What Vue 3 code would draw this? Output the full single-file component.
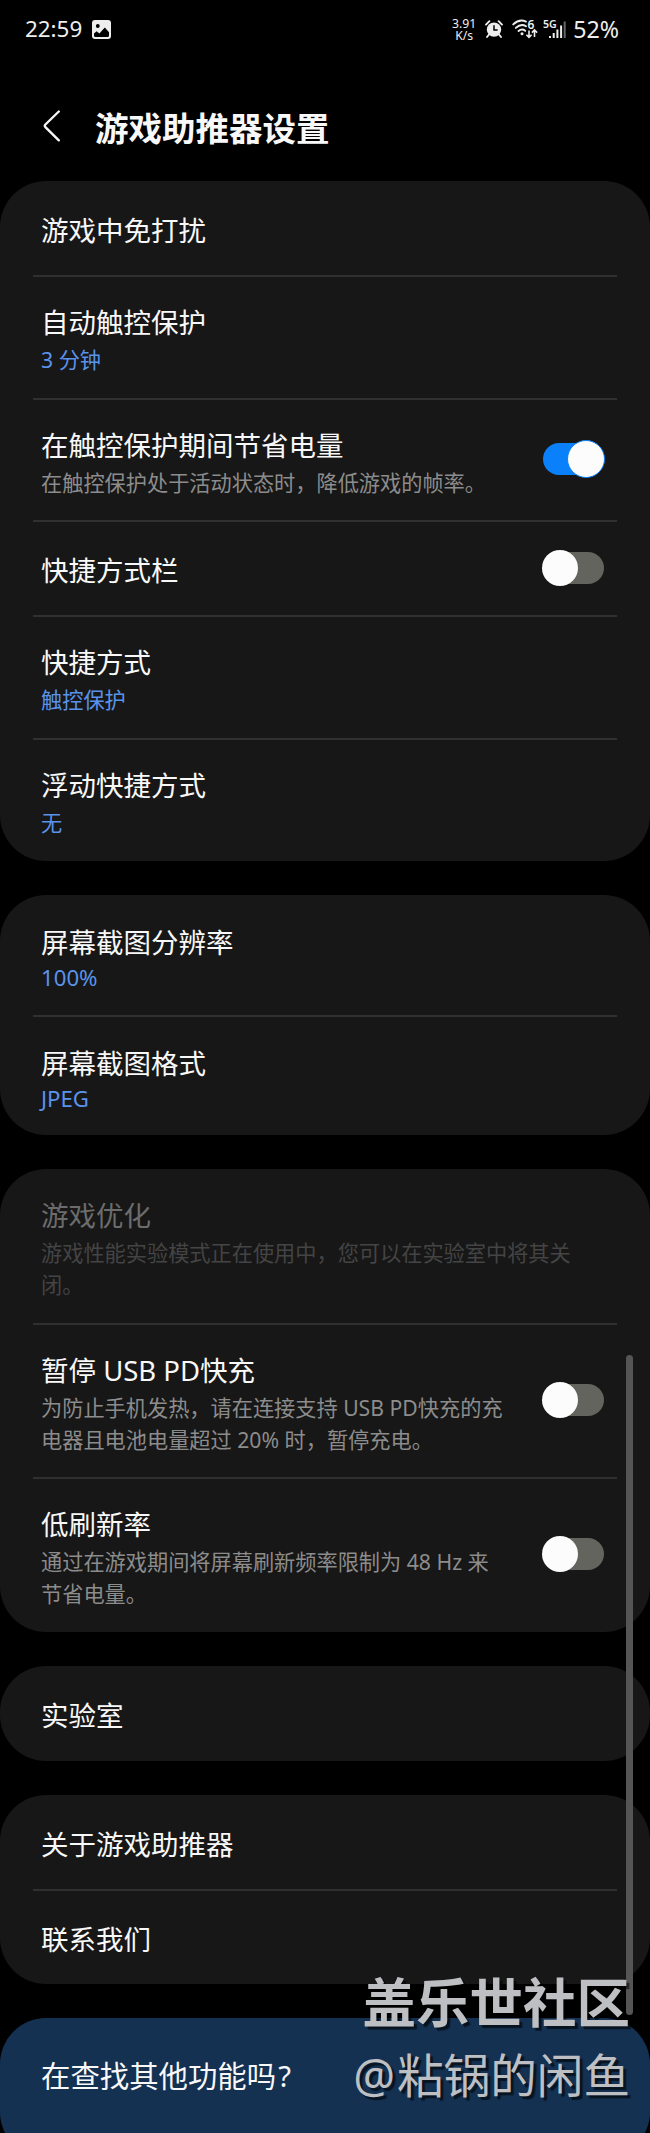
<script setup>
const groups = [
  [
    { title: '游戏中免打扰', h: 95 },
    { title: '自动触控保护', value: '3 分钟', h: 123 },
    { title: '在触控保护期间节省电量', note: ['在触控保护处于活动状态时，降低游戏的帧率。'], toggle: 'on', h: 122 },
    { title: '快捷方式栏', toggle: 'off', h: 95 },
    { title: '快捷方式', value: '触控保护', h: 123 },
    { title: '浮动快捷方式', value: '无', h: 122 },
  ],
  [
    { title: '屏幕截图分辨率', value: '100%', latin: true, h: 121 },
    { title: '屏幕截图格式', value: 'JPEG', latin: true, h: 119 },
  ],
  [
    { title: '游戏优化', note: ['游戏性能实验模式正在使用中，您可以在实验室中将其关', '闭。'], disabled: true, h: 155 },
    { title: '暂停 USB PD快充', note: ['为防止手机发热，请在连接支持 USB PD快充的充', '电器且电池电量超过 20% 时，暂停充电。'], toggle: 'off', h: 154 },
    { title: '低刷新率', note: ['通过在游戏期间将屏幕刷新频率限制为 48 Hz 来', '节省电量。'], toggle: 'off', h: 154 },
  ],
  [{ title: '实验室', h: 95 }],
  [
    { title: '关于游戏助推器', h: 95 },
    { title: '联系我们', h: 94 },
  ],
]
</script>

<template>
  <div class="screen">
    <div class="status">
      <span class="time">22:59</span>
      <svg class="pic" viewBox="0 0 19 19" width="19" height="19">
        <rect x="0" y="0" width="19" height="19" rx="3" fill="#eee" />
        <circle cx="5.8" cy="6" r="1.9" fill="#000" />
        <path d="M2 13.5 L4.6 11.2 L7.4 13.4 L12.8 7.6 L17 12.2 V15.5 Q17 17 15.5 17 H3.5 Q2 17 2 15.5 Z" fill="#000" />
      </svg>
      <span class="grow"></span>
      <span class="speed"><span>3.91</span><span>K/s</span></span>
      <svg class="alarm" viewBox="0 0 18 18" width="18" height="18">
        <circle cx="9" cy="9.6" r="7.2" fill="#eee" />
        <path d="M1 4.6 L4.4 1.2 M17 4.6 L13.6 1.2 M4 14.5 L2 17 M14 14.5 L16 17" stroke="#eee" stroke-width="1.9" stroke-linecap="round" />
        <path d="M9 5.2 V10 H12.6" stroke="#000" stroke-width="1.5" fill="none" />
      </svg>
      <svg class="wifi" viewBox="0 0 26 20" width="26" height="20">
        <g fill="none" stroke="#eee" stroke-width="1.9" stroke-linecap="round">
          <path d="M1.2 5.4 Q7.5 -0.6 14 2.6" />
          <path d="M3.8 8.9 Q9 4.2 14 7.2" />
          <path d="M6.5 12 Q10 9.2 13.2 11.8" />
        </g>
        <circle cx="10" cy="14.8" r="1.5" fill="#eee" />
        <text x="15.4" y="9.6" class="six">6</text>
        <path d="M17 11.5 V18 M14.4 15.8 L17 18.4 L19.6 15.8 M22.5 18 V11.5 M19.9 13.6 L22.5 11 L25.1 13.6" fill="none" stroke="#eee" stroke-width="1.6" />
      </svg>
      <svg class="cell" viewBox="0 0 24 20" width="24" height="20">
        <text x="0" y="8.6" class="fiveg">5G</text>
        <path d="M7 17 V19 M10.7 14 V19 M14.4 10.5 V19 M18.1 6.5 V19" stroke="#eee" stroke-width="2" />
        <path d="M21.7 2.5 V19" stroke="#666" stroke-width="2" />
      </svg>
      <span class="pct">52%</span>
    </div>

    <header class="header">
      <svg class="back" viewBox="0 0 18 32" width="18" height="32">
        <path d="M15.8 1.5 L2.4 14.5 Q1.2 15.8 2.4 17.1 L15.8 30.3" fill="none" stroke="#f5f5f5" stroke-width="2.4" stroke-linecap="round" />
      </svg>
      <h1>游戏助推器设置</h1>
    </header>

    <main class="list">
      <section v-for="(rows, g) in groups" :key="g" class="card">
        <div
          v-for="row in rows"
          :key="row.title"
          class="row"
          :class="{ single: !row.value && !row.note, latin: row.latin, disabled: row.disabled }"
          :style="{ height: row.h + 'px' }"
        >
          <div class="copy">
            <div class="title">{{ row.title }}</div>
            <div v-if="row.value" class="sub value">{{ row.value }}</div>
            <div v-for="line in row.note" :key="line" class="sub">{{ line }}</div>
          </div>
          <span v-if="row.toggle" class="toggle" :class="row.toggle"><i></i></span>
        </div>
      </section>
      <section class="card more">在查找其他功能吗<span class="ask">?</span></section>
    </main>

    <div class="scrollbar"></div>
    <div class="mark">
      <div class="site">盖乐世社区</div>
      <div class="user"><span class="at">@</span>粘锅的闲鱼</div>
    </div>
  </div>
</template>

<style>
html, body { margin: 0; background: #000; }
</style>

<style scoped>
.screen {
  position: relative;
  width: 650px;
  height: 2133px;
  overflow: hidden;
  background: #000;
  color: #f8f8f8;
  font-family: "Noto Sans", "Noto Sans CJK SC", sans-serif;
}
.status {
  display: flex;
  align-items: flex-start;
  box-sizing: border-box;
  height: 60px;
  padding: 19px 31px 0 25px;
  color: #eee;
}
.time { font-size: 22.4px; line-height: 22px; margin-top: -1px; }
.pic { margin: 1px 0 0 10px; }
.grow { flex: 1; }
.speed {
  display: flex;
  flex-direction: column;
  align-items: center;
  width: 26px;
  margin-right: 8px;
  font-size: 12.2px;
  line-height: 12px;
  margin-top: -1px;
}
.alarm { margin: 1px 9px 0 0; }
.wifi { margin-right: 5px; overflow: visible; }
.cell { margin-right: 6px; overflow: visible; }
.six { font-size: 12px; font-weight: 600; fill: #eee; }
.fiveg { font-size: 10.6px; font-weight: 600; fill: #eee; }
.pct { font-size: 23.2px; line-height: 22px; margin-top: -1px; }
.header {
  display: flex;
  align-items: center;
  height: 121px;
  box-sizing: border-box;
  padding: 11px 0 0 43px;
}
.back { margin: 0; }
h1 { margin: 3px 0 0 34px; font-size: 33.5px; line-height: 40px; font-weight: 700; white-space: nowrap; }
.list { display: flex; flex-direction: column; gap: 34px; }
.card { border-radius: 46px; background: #171717; }
.row {
  position: relative;
  display: flex;
  justify-content: space-between;
  box-sizing: border-box;
  padding: 29px 46px 0 41px;
}
.row + .row::before {
  content: "";
  position: absolute;
  left: 33px;
  right: 33px;
  top: -1px;
  height: 2px;
  background: #303030;
}
.row.single { padding-top: 32px; }
.title { font-size: 27.5px; line-height: 36px; white-space: nowrap; }
.sub { font-size: 21.2px; line-height: 32px; color: #8c8c8c; white-space: nowrap; }
.title + .sub { margin-top: 3px; }
.latin .title + .sub { margin-top: 1px; font-size: 22.2px; }
.latin { padding-top: 30px; }
.sub.value { color: #5a93ea; }
.disabled .title { color: #6c6c6c; }
.disabled .sub { color: #444; }
.toggle {
  position: absolute;
  right: 46px;
  top: calc(50% - 17px);
  width: 61px;
  height: 32px;
  border-radius: 16px;
  background: #63645e;
}
.toggle i {
  position: absolute;
  top: -2px;
  left: -1px;
  width: 36px;
  height: 36px;
  border-radius: 50%;
  background: #fcfcfc;
}
.toggle.on { background: #0a80fb; }
.toggle.on i {
  box-sizing: border-box;
  left: auto;
  right: -1px;
  top: -3px;
  width: 38px;
  height: 38px;
  border: 1.5px solid #0a80fb;
}
.more {
  box-sizing: border-box;
  height: 140px;
  padding: 38px 0 0 41px;
  background: #143152;
  font-size: 29.4px;
  line-height: 40px;
}
.ask { margin-left: 2px; }
.scrollbar {
  position: absolute;
  left: 626px;
  top: 1355px;
  width: 7px;
  height: 660px;
  border-radius: 4px;
  background: #555;
}
.mark {
  position: absolute;
  right: 20px;
  top: 1967px;
  text-align: right;
  white-space: nowrap;
  color: #bdbfc3;
  text-shadow: 3px 3px 1px rgba(0, 0, 0, 0.6);
}
.site { font-size: 53.5px; line-height: 72px; font-weight: 700; }
.user { font-size: 46.6px; line-height: 72px; }
.at { margin-right: 2px; }
</style>
